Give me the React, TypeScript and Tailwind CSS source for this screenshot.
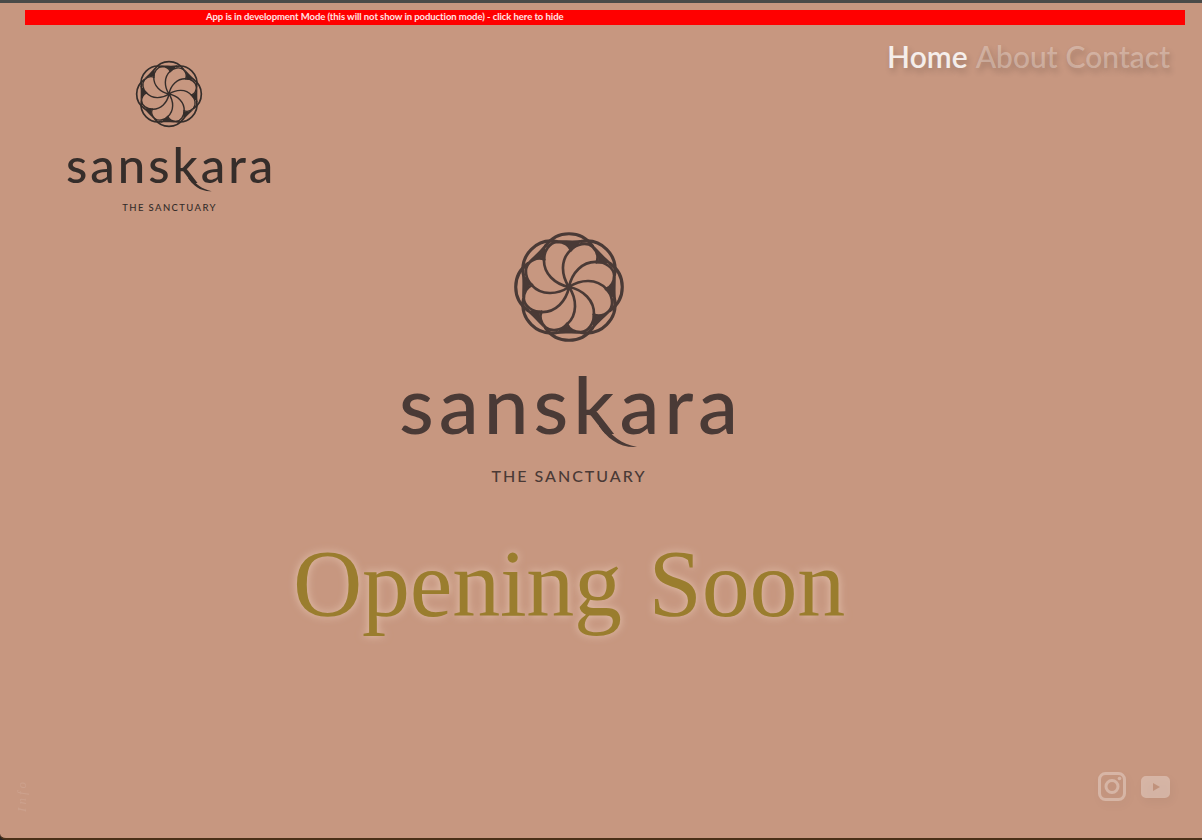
import React from 'react';

const ROTATIONS = [0, 45, 90, 135, 180, 225, 270, 315];

// one lobe of the flower mark, repeated around the centre
const Flower: React.FC<{ size: number; stroke: number; color: string; className?: string }> = ({ size, stroke, color, className }) => (
  <svg className={className} width={size} height={size} viewBox="-57 -57 114 114" fill="none">
    {ROTATIONS.map((r) => (
      <g key={r} transform={`rotate(${r})`}>
        <path
          d="M0 0 C-8 -12 -9 -28 2 -38 C8 -44 18 -46 24 -41 C29 -36 30 -30 28 -25"
          stroke={color}
          strokeWidth={stroke * 0.85}
          strokeLinecap="round"
        />
        <path d="M-24 -41.5 A29 29 0 0 1 24 -41.5" stroke={color} strokeWidth={stroke} strokeLinecap="round" />
        <path d="M24 -43 C30 -38 36 -30 44 -24 L29 -24 C31 -30 29 -37 24 -43 Z" fill={color} />
      </g>
    ))}
    <circle cx="0" cy="0" r="3" fill={color} />
  </svg>
);

const Logo: React.FC<{ large?: boolean }> = ({ large }) => {
  const color = large ? '#4a3a36' : '#352d2a';
  return (
    <div className="flex flex-col items-center">
      <Flower className={large ? '-mt-[1px]' : 'mr-[4px]'} size={large ? 112 : 68} stroke={large ? 3.2 : 2.8} color={color} />
      <div
        className={
          large
            ? 'relative ml-[4px] mt-[13px] h-[95px] font-["Lato",sans-serif] text-[80px] font-medium leading-[95px] tracking-[5px]'
            : 'relative mt-[7px] h-[58px] font-["Lato",sans-serif] text-[49px] font-medium leading-[58px] tracking-[3px]'
        }
        style={{ color }}
      >
        sanskara
        <svg
          className={large ? 'absolute left-[200px] top-[70px]' : 'absolute left-[122px] top-[43px]'}
          width={large ? 40 : 25}
          height={large ? 24 : 15}
          viewBox="0 0 40 24"
        >
          <path d="M0 0 L6 0 C12 9 22 18 38 21 C20 22 8 12 0 0 Z" fill={color} />
        </svg>
      </div>
      <div
        className={
          large
            ? 'mt-[16px] font-["Lato",sans-serif] text-[16px] font-medium leading-[18px] tracking-[2px]'
            : 'mr-[3px] mt-[9px] font-["Lato",sans-serif] text-[9.5px] font-medium leading-[11px] tracking-[1.4px]'
        }
        style={{ color }}
      >
        THE SANCTUARY
      </div>
    </div>
  );
};

export default function App() {
  return (
    <div className="h-[840px] w-[1202px] bg-[#2a2320]">
      <div className="flex h-full flex-col overflow-hidden rounded-bl-[6px] border-t-[3px] border-b-2 border-t-[#4a4a48] border-b-[#4a3018] bg-[#c79780] font-['Lato',sans-serif]">
        <div className="ml-[25px] mr-[17px] mt-[7px] flex h-[15px] shrink-0 items-center bg-[#ff0000] pl-[181px] text-[9.5px] font-bold tracking-[-0.07px] text-white/90">
          App is in development Mode (this will not show in poduction mode) - click here to hide
        </div>

        <header className="flex shrink-0 items-start justify-between pl-[66px] pr-[32px]">
          <div className="mt-[35px]">
            <Logo />
          </div>
          <nav className="mt-[11px] flex gap-[8px] text-[30px] font-medium leading-[40px] [text-shadow:2px_4px_6px_rgba(0,0,0,0.2)]">
            <a className="font-semibold text-white/85">Home</a>
            <a className="text-white/30">About</a>
            <a className="text-white/30">Contact</a>
          </nav>
        </header>

        <main className="flex flex-col items-center pr-[64px] pt-[19px]">
          <Logo large />
          <h1 className="mt-[39px] font-['Liberation_Serif',serif] text-[96px] font-normal leading-[120px] tracking-[-0.25px] text-[#9a7d2e] [word-spacing:3px] [text-shadow:0_0_8px_rgba(255,235,215,0.55)]">
            Opening Soon
          </h1>
        </main>

        <footer className="mt-auto flex items-end justify-between pb-[26px] pl-[12px] pr-[32px]">
          <span className="rotate-180 font-['Liberation_Serif',serif] text-[13px] italic tracking-[3px] text-white/10 [writing-mode:vertical-rl]">
            Info
          </span>
          <div className="mb-[11px] flex items-center gap-[15px] text-white/30 [filter:drop-shadow(2px_4px_4px_rgba(0,0,0,0.12))]">
            <svg width="28" height="29" viewBox="0 0 28 29" fill="none" stroke="currentColor">
              <rect x="1.5" y="1.5" width="25" height="26" rx="6" strokeWidth="3" />
              <circle cx="14" cy="14.5" r="6" strokeWidth="3" />
              <circle cx="21.5" cy="6.5" r="1.8" fill="currentColor" stroke="none" />
            </svg>
            <svg width="29" height="22" viewBox="0 0 29 22">
              <path
                fillRule="evenodd"
                fill="currentColor"
                d="M5 0 H24 A5 5 0 0 1 29 5 V17 A5 5 0 0 1 24 22 H5 A5 5 0 0 1 0 17 V5 A5 5 0 0 1 5 0 Z M12 7 V15 L19 11 Z"
              />
            </svg>
          </div>
        </footer>
      </div>
    </div>
  );
}
